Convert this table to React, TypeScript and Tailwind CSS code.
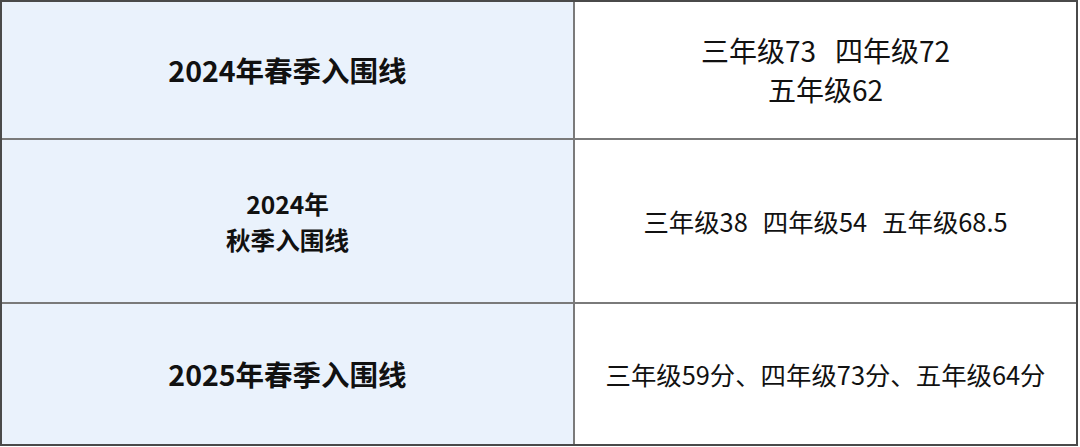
const font = { fontFamily: '"Noto Sans CJK SC", "Noto Sans", sans-serif' };

function Gap({ w }: { w: string }) {
  return <span className={`inline-block ${w}`} />;
}

export default function App() {
  const left = "flex flex-col items-center justify-center bg-[#eaf2fc] font-bold text-[#111] text-center";
  const right = "flex flex-col items-center justify-center bg-white text-[#111] text-center whitespace-nowrap";

  return (
    <div className="w-[1080px] h-[447px] bg-white" style={font}>
      <div className="grid w-[1078px] h-[446px] grid-cols-[571px_501px] grid-rows-[136px_162px_140px] gap-[2px] border-2 border-[#4a4a4a] bg-[#7a7a7a]">
        <div className={`${left} text-[28.5px]`}>2024年春季入围线</div>
        <div className={`${right} text-[28px] leading-[39px]`}>
          <span>
            三年级73<Gap w="w-[19px]" />四年级72
          </span>
          <span>五年级62</span>
        </div>

        <div className={`${left} text-[24.6px] leading-[36px]`}>
          <span>2024年</span>
          <span>秋季入围线</span>
        </div>
        <div className={`${right} text-[25.4px]`}>
          <span>
            三年级38<Gap w="w-[15px]" />四年级54<Gap w="w-[15px]" />五年级68.5
          </span>
        </div>

        <div className={`${left} text-[28.5px]`}>2025年春季入围线</div>
        <div className={`${right} text-[25.4px]`}>三年级59分、四年级73分、五年级64分</div>
      </div>
    </div>
  );
}
